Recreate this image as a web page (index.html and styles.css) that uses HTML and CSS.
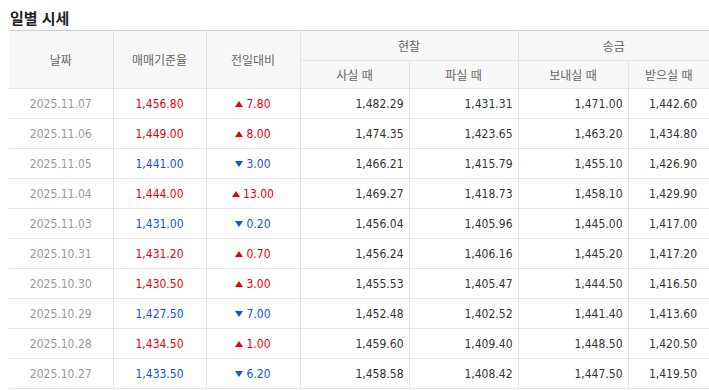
FILE: index.html
```html
<!DOCTYPE html>
<html lang="ko">
<head>
    <meta charset="UTF-8">
    <meta name="viewport" content="width=device-width, initial-scale=1.0">
    <title>일별 시세</title>
    <link rel="stylesheet" href="styles.css">
</head>
<body>

    <h2 class="title">일별 시세</h2>

    <table class="daily">
        <colgroup>
            <col style="width:104px">
            <col style="width:93px">
            <col style="width:94px">
            <col style="width:109px">
            <col style="width:109px">
            <col style="width:110px">
            <col style="width:81px">
        </colgroup>
        <thead>
            <tr class="top">
                <th rowspan="2">날짜</th>
                <th rowspan="2">매매기준율</th>
                <th rowspan="2">전일대비</th>
                <th colspan="2">현찰</th>
                <th colspan="2" class="last">송금</th>
            </tr>
            <tr class="sub">
                <th>사실 때</th>
                <th>파실 때</th>
                <th>보내실 때</th>
                <th class="last">받으실 때</th>
            </tr>
        </thead>
        <tbody id="rows"></tbody>
    </table>

    <script>
        let rows=[
            ["2025.11.07","1,456.80","up","7.80","1,482.29","1,431.31","1,471.00","1,442.60"],
            ["2025.11.06","1,449.00","up","8.00","1,474.35","1,423.65","1,463.20","1,434.80"],
            ["2025.11.05","1,441.00","down","3.00","1,466.21","1,415.79","1,455.10","1,426.90"],
            ["2025.11.04","1,444.00","up","13.00","1,469.27","1,418.73","1,458.10","1,429.90"],
            ["2025.11.03","1,431.00","down","0.20","1,456.04","1,405.96","1,445.00","1,417.00"],
            ["2025.10.31","1,431.20","up","0.70","1,456.24","1,406.16","1,445.20","1,417.20"],
            ["2025.10.30","1,430.50","up","3.00","1,455.53","1,405.47","1,444.50","1,416.50"],
            ["2025.10.29","1,427.50","down","7.00","1,452.48","1,402.52","1,441.40","1,413.60"],
            ["2025.10.28","1,434.50","up","1.00","1,459.60","1,409.40","1,448.50","1,420.50"],
            ["2025.10.27","1,433.50","down","6.20","1,458.58","1,408.42","1,447.50","1,419.50"]
        ];
        let tbody=document.querySelector('#rows');

        rows.forEach((r)=>{
            let tr=document.createElement('tr');
            tr.innerHTML=`
                <td class="date">${r[0]}</td>
                <td class="rate ${r[2]}">${r[1]}</td>
                <td class="diff ${r[2]}"><span class="arrow"></span>${r[3]}</td>
                <td class="num">${r[4]}</td>
                <td class="num">${r[5]}</td>
                <td class="num">${r[6]}</td>
                <td class="num last">${r[7]}</td>`;
            tbody.appendChild(tr);
        });
    </script>
</body>
</html>
```

FILE: styles.css
```css
body{
    margin:0;
    padding:0 0 0 9px;
    background-color:#fff;
    font-family:"Noto Sans CJK KR","Noto Sans",sans-serif;
}

.title{
    margin:8px 0 2px 1px;
    font-size:15px;
    line-height:20px;
    font-weight:700;
    color:#222;
}

.daily{
    width:700px;
    table-layout:fixed;
    border-collapse:collapse;
    border-top:1px solid #cfcfcf;
}

.daily th{
    background-color:#f8f8f8;
    color:#666;
    font-size:12px;
    font-weight:400;
    line-height:16px;
    padding:0;
    border-bottom:1px solid #e6e6e6;
    border-right:1px solid #e6e6e6;
}
.daily .top th{
    height:29px;
}
.daily .sub th{
    height:27px;
}
.daily th.last,.daily td.last{
    border-right:none;
}

.daily td{
    height:29px;
    padding:0 5px 0 0;
    font-family:"DejaVu Sans Condensed","Liberation Sans",sans-serif;
    font-size:12px;
    line-height:16px;
    color:#333;
    text-align:right;
    border-bottom:1px solid #e6e6e6;
    border-right:1px solid #e6e6e6;
}
.daily td.date,.daily td.rate,.daily td.diff{
    text-align:center;
    padding:0;
}
.daily td.date{
    color:#999;
}
.daily td.last{
    padding-right:12px;
}

.daily td.up{
    color:#e8000b;
}
.daily td.down{
    color:#1253e6;
}

.arrow{
    display:inline-block;
    width:0;
    height:0;
    margin:0 3px 1px 0;
    border-left:4px solid transparent;
    border-right:4px solid transparent;
}
.up .arrow{
    border-bottom:6px solid #e8000b;
}
.down .arrow{
    border-top:6px solid #1253e6;
}
```
